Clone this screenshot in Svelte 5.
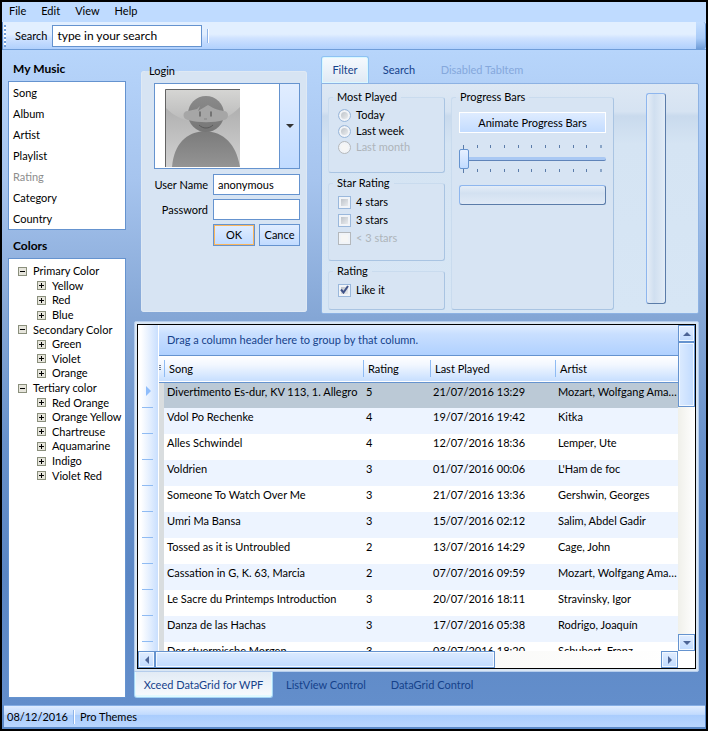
<script>
    const menus = ['File', 'Edit', 'View', 'Help'];

    const music = ['Song', 'Album', 'Artist', 'Playlist', 'Rating', 'Category', 'Country'];

    const colors = [
        { name: 'Primary Color', items: ['Yellow', 'Red', 'Blue'] },
        { name: 'Secondary Color', items: ['Green', 'Violet', 'Orange'] },
        { name: 'Tertiary color', items: ['Red Orange', 'Orange Yellow', 'Chartreuse', 'Aquamarine', 'Indigo', 'Violet Red'] }
    ];

    const songs = [
        ['Divertimento Es-dur, KV 113, 1. Allegro', 5, '21/07/2016 13:29', 'Mozart, Wolfgang Amadeus'],
        ['Vdol Po Rechenke', 4, '19/07/2016 19:42', 'Kitka'],
        ['Alles Schwindel', 4, '12/07/2016 18:36', 'Lemper, Ute'],
        ['Voldrien', 3, '01/07/2016 00:06', "L'Ham de foc"],
        ['Someone To Watch Over Me', 3, '21/07/2016 13:36', 'Gershwin, Georges'],
        ['Umri Ma Bansa', 3, '15/07/2016 02:12', 'Salim, Abdel Gadir'],
        ['Tossed as it is Untroubled', 2, '13/07/2016 14:29', 'Cage, John'],
        ['Cassation in G, K. 63, Marcia', 2, '07/07/2016 09:59', 'Mozart, Wolfgang Amadeus'],
        ['Le Sacre du Printemps Introduction', 3, '20/07/2016 18:11', 'Stravinsky, Igor'],
        ['Danza de las Hachas', 3, '17/07/2016 05:38', 'Rodrigo, Joaquín'],
        ['Der stuermische Morgen', 3, '03/07/2016 18:20', 'Schubert, Franz']
    ];

    const ticks = Array(11).fill(0);

    let search = 'type in your search';
    let userName = 'anonymous';
    let password = '';
    let played = '';
    let likeIt = true;
    let speed = 0;
    let selected = 0;
</script>

<div class="window">
    <nav class="menu">
        {#each menus as menu}
            <button>{menu}</button>
        {/each}
    </nav>

    <div class="toolbar">
        <span class="grip"></span>
        <label for="search">Search</label>
        <input id="search" type="text" bind:value={search} />
        <span class="bar-line"></span>
        <span class="overflow"></span>
    </div>

    <main>
        <aside>
            <h2>My Music</h2>
            <ul class="music">
                {#each music as entry}
                    <li class:disabled={entry === 'Rating'}>{entry}</li>
                {/each}
            </ul>

            <h2>Colors</h2>
            <div class="tree">
                <div class="tree-rows">
                    {#each colors as group}
                        <div class="node">
                            <svg width="9" height="9" viewBox="0 0 9 9"><rect x=".5" y=".5" width="8" height="8" fill="#e6e5dc" stroke="#8a8f7c" /><path d="M2 4.5h5" stroke="#000" /></svg>
                            {group.name}
                        </div>
                        {#each group.items as item}
                            <div class="node leaf">
                                <svg width="9" height="9" viewBox="0 0 9 9"><rect x=".5" y=".5" width="8" height="8" fill="#e6e5dc" stroke="#8a8f7c" /><path d="M2 4.5h5M4.5 2v5" stroke="#000" /></svg>
                                {item}
                            </div>
                        {/each}
                    {/each}
                </div>
            </div>
        </aside>

        <section class="content">
            <div class="top">
                <fieldset class="login">
                    <legend>Login</legend>
                    <div class="combo">
                        <div class="picture">
                            <svg width="75" height="78" viewBox="0 0 75 78">
                                <defs>
                                    <linearGradient id="back" x1="0" y1="0" x2="0" y2="1"><stop offset="0" stop-color="#a5a5a5" /><stop offset="1" stop-color="#d2d2d2" /></linearGradient>
                                    <linearGradient id="glow" x1="0" y1="0" x2="0" y2="1"><stop offset="0" stop-color="#d6d6d4" /><stop offset="1" stop-color="#b9b9b9" /></linearGradient>
                                    <linearGradient id="body" x1="0" y1="0" x2="0" y2="1"><stop offset="0" stop-color="#7b7b7b" /><stop offset="1" stop-color="#949494" /></linearGradient>
                                    <linearGradient id="hair" x1="0" y1="0" x2="0" y2="1"><stop offset="0" stop-color="#8a8a8a" /><stop offset="1" stop-color="#767676" /></linearGradient>
                                </defs>
                                <rect width="75" height="78" fill="url(#back)" />
                                <path d="M0 0H75V18C64 29 54 33 38 33S10 29 0 18Z" fill="url(#glow)" />
                                <path d="M7 78C9 55 21 43 40 42C59 43 71 55 75 78Z" fill="url(#body)" />
                                <circle cx="41" cy="25" r="18" fill="url(#hair)" />
                                <path d="M23 22L32 20L35 17L33 22L43 16C49 20 54 21 58 22C64 21 65 30 59 31C48 34 34 34 23 31C17 30 17 22 23 22Z" fill="#a6a6a6" />
                                <path d="M35 23v4M46 23v4" stroke="#5e5e5e" stroke-width="1.4" stroke-linecap="round" />
                                <path d="M39 30h3" stroke="#858585" />
                                <path d="M34 36C38 40 44 40 48 36" fill="none" stroke="#5a5a5a" />
                                <path d="M.5 78V.5H75" fill="none" stroke="#636363" />
                            </svg>
                        </div>
                        <span class="drop"><svg width="8" height="4" viewBox="0 0 8 4"><path d="M0 0h8L4 4z" fill="#333" /></svg></span>
                        <select aria-label="Picture"><option></option></select>
                    </div>
                    <div class="form">
                        <label for="user">User Name</label>
                        <input id="user" type="text" bind:value={userName} />
                        <label for="password">Password</label>
                        <input id="password" type="password" bind:value={password} />
                        <div class="buttons">
                            <button class="ok">OK</button>
                            <button>Cance</button>
                        </div>
                    </div>
                </fieldset>

                <div class="tabs">
                    <div class="tab-strip" role="tablist">
                        <button class="active" role="tab" aria-selected="true">Filter</button>
                        <button role="tab" aria-selected="false">Search</button>
                        <button role="tab" aria-selected="false" disabled>Disabled TabItem</button>
                    </div>
                    <div class="filter">
                        <div class="groups">
                            <fieldset class="most">
                                <legend>Most Played</legend>
                                <label><input type="radio" name="played" value="today" bind:group={played} />Today</label>
                                <label><input type="radio" name="played" value="week" bind:group={played} />Last week</label>
                                <label class="off"><input type="radio" name="played" value="month" bind:group={played} disabled />Last month</label>
                            </fieldset>
                            <fieldset class="stars">
                                <legend>Star Rating</legend>
                                <label><input type="checkbox" />4 stars</label>
                                <label><input type="checkbox" />3 stars</label>
                                <label class="off"><input type="checkbox" disabled />&lt; 3 stars</label>
                            </fieldset>
                            <fieldset class="stars like">
                                <legend>Rating</legend>
                                <label>
                                    <input type="checkbox" bind:checked={likeIt} />Like it
                                    {#if likeIt}
                                        <svg class="check" width="9" height="9" viewBox="0 0 9 9"><path d="M1 4.5L3.5 7.5L8 1" fill="none" stroke="#3f5288" stroke-width="2" /></svg>
                                    {/if}
                                </label>
                            </fieldset>
                        </div>
                        <fieldset class="progress">
                            <legend>Progress Bars</legend>
                            <button>Animate Progress Bars</button>
                            <div class="slider">
                                <div class="ticks">{#each ticks as t}<i></i>{/each}</div>
                                <input type="range" min="0" max="10" bind:value={speed} aria-label="Speed" />
                                <div class="ticks">{#each ticks as t}<i></i>{/each}</div>
                            </div>
                            <div class="meter" role="progressbar" aria-label="Progress"></div>
                        </fieldset>
                        <div class="side">
                            <div class="meter tall" role="progressbar" aria-label="Vertical progress"></div>
                        </div>
                    </div>
                </div>
            </div>

            <div class="data">
                <div class="grid">
                    <div class="selectors">
                        {#each songs as song, i}
                            <div class="selector">
                                {#if i === selected}
                                    <svg width="5" height="10" viewBox="0 0 5 10"><path d="M0 0l5 5l-5 5z" fill="#8fbdfb" /></svg>
                                {/if}
                            </div>
                        {/each}
                    </div>
                    <div class="rows">
                        <div class="group-by">Drag a column header here to group by that column.</div>
                        <table>
                            <thead>
                                <tr>
                                    <th class="handle"><svg width="3" height="7" viewBox="0 0 3 7"><path d="M0 .5h2M0 2.5h2M0 4.5h2" stroke="#6c7a90" /></svg></th>
                                    <th class="song"><span>Song</span></th>
                                    <th class="rating"><span>Rating</span></th>
                                    <th class="last"><span>Last Played</span></th>
                                    <th><span>Artist</span></th>
                                </tr>
                            </thead>
                            <tbody>
                                {#each songs as song, i}
                                    <tr class:selected={i === selected} on:click={() => (selected = i)}>
                                        <td class="handle"></td>
                                        {#each song as value}
                                            <td>{value}</td>
                                        {/each}
                                    </tr>
                                {/each}
                            </tbody>
                        </table>
                    </div>
                    <div class="scroll vertical">
                        <button aria-label="Scroll up"><svg width="8" height="4" viewBox="0 0 8 4"><path d="M0 4h8L4 0z" fill="#4c6496" /></svg></button>
                        <div class="thumb"></div>
                        <button aria-label="Scroll down"><svg width="8" height="4" viewBox="0 0 8 4"><path d="M0 0h8L4 4z" fill="#4c6496" /></svg></button>
                    </div>
                    <div class="scroll horizontal">
                        <button aria-label="Scroll left"><svg width="4" height="8" viewBox="0 0 4 8"><path d="M4 0v8L0 4z" fill="#4c6496" /></svg></button>
                        <div class="thumb"></div>
                        <button aria-label="Scroll right"><svg width="4" height="8" viewBox="0 0 4 8"><path d="M0 0v8L4 4z" fill="#4c6496" /></svg></button>
                    </div>
                </div>
            </div>
            <div class="bottom-tabs" role="tablist">
                <button class="active" role="tab" aria-selected="true">Xceed DataGrid for WPF</button>
                <button role="tab" aria-selected="false">ListView Control</button>
                <button role="tab" aria-selected="false">DataGrid Control</button>
            </div>
        </section>
    </main>

    <footer>
        <span>08/12/2016</span>
        <span class="bar-line"></span>
        <span>Pro Themes</span>
    </footer>
</div>

<style>
    :global(body) {
        margin: 0;
    }

    .window, .window * {
        box-sizing: border-box;
    }

    .window {
        display: flex;
        flex-direction: column;
        height: 100vh;
        border: 2px solid #000;
        background: #5c8ac8;
        font-family: Lato, "Open Sans", sans-serif;
        font-size: 11px;
        line-height: 14px;
        color: #000;
    }

    button, input, select {
        font: inherit;
        color: inherit;
        margin: 0;
        padding: 0;
    }

    button {
        background: none;
        border: none;
        white-space: nowrap;
    }

    svg {
        display: block;
        flex: none;
    }

    input[type='text'], input[type='password'] {
        border: 1px solid #6593cf;
        background: #fff;
        padding: 0 4px;
        min-width: 0;
        outline: none;
    }

    /* menu and toolbar */
    .menu {
        display: flex;
        gap: 15px;
        height: 20px;
        padding: 0 7px 2px;
        background: #bfdbff;
    }

    .toolbar {
        display: flex;
        align-items: center;
        height: 28px;
        margin-left: 1px;
        border-bottom: 1px solid #6f9dd9;
        background: linear-gradient(#e2efff 45%, #cfe2ff 60%, #b0d0fd);
    }

    .grip {
        width: 2px;
        height: 22px;
        margin: 0 9px 0 1px;
        background: repeating-linear-gradient(#6f9dd9 0 2px, #fff 2px 4px);
    }

    .toolbar input {
        width: 150px;
        height: 22px;
        margin: 0 5px 0 5px;
        font-size: 12px;
    }

    .bar-line {
        width: 2px;
        height: 14px;
        border-left: 1px solid #8fb4e8;
        background: #fff;
    }

    .overflow {
        width: 10px;
        height: 27px;
        margin-left: auto;
        border-right: 1px solid #6f9dd9;
        border-radius: 0 3px 3px 0;
        background: linear-gradient(#c4deff, #a9cbf8 60%, #6f9dd9);
    }

    main {
        flex: 1;
        min-height: 0;
        display: flex;
        gap: 8px;
        padding: 6px 7px 7px 6px;
        background: linear-gradient(#b7d5fb, #a6c4ee 20%, #84a6d5 41%, #6891cb 60%, #5a86c4 80%, #638ecb);
    }

    /* left side lists */
    aside {
        display: flex;
        flex-direction: column;
        width: 118px;
    }

    h2 {
        margin: 6px 5px 5px;
        font-size: 12px;
        line-height: 14px;
    }

    h2:nth-of-type(2) {
        margin-top: 9px;
    }

    ul {
        margin: 0;
        padding: 0 4px;
        list-style: none;
    }

    .music, .tree {
        border: 1px solid #6593cf;
        background: #fff;
    }

    .music li {
        height: 21px;
        line-height: 21px;
    }

    .disabled {
        color: #8d8d8d;
    }

    .tree {
        flex: 1;
        padding: 5px 0 0 9px;
    }

    .tree-rows {
        display: grid;
        grid-template-rows: repeat(15, 1fr);
        height: 219px;
    }

    .node {
        display: flex;
        align-items: center;
        gap: 6px;
        white-space: nowrap;
    }

    .leaf {
        padding-left: 19px;
    }

    .content {
        flex: 1;
        min-width: 0;
        display: flex;
        flex-direction: column;
    }

    .top {
        display: flex;
        gap: 14px;
        height: 258px;
        margin-bottom: 7px;
        padding-left: 7px;
    }

    fieldset {
        min-width: 0;
        margin: 0;
        border: 1px solid #c9dbee;
        border-right-color: #a9c4e2;
        border-bottom-color: #a9c4e2;
        border-radius: 3px;
        background: #d7e4f3;
    }

    legend {
        padding: 0 4px;
        line-height: 14px;
    }

    /* login */
    .login {
        width: 166px;
        margin-top: 8px;
        margin-bottom: 2px;
        padding: 5px 6px 0 12px;
        border-color: #dfe9f4;
    }

    .login legend {
        margin-left: -9px;
    }

    .combo {
        position: relative;
        display: flex;
        height: 86px;
        border: 1px solid #6593cf;
        background: #fff;
    }

    .picture {
        flex: 1;
        padding: 5px 0 0 10px;
    }

    .drop {
        display: flex;
        align-items: center;
        justify-content: center;
        width: 20px;
        border-left: 1px solid #6593cf;
        background: linear-gradient(#e1edff, #c1dbff);
    }

    .combo select {
        position: absolute;
        inset: 0;
        width: 100%;
        height: 100%;
        opacity: 0;
    }

    .form {
        display: grid;
        grid-template-columns: 1fr 87px;
        grid-template-rows: 21px 21px 22px;
        row-gap: 4px;
        column-gap: 5px;
        align-items: center;
        margin-top: 5px;
        text-align: right;
        white-space: nowrap;
    }

    .form input {
        height: 21px;
    }

    .buttons {
        grid-column: 2;
        display: grid;
        grid-template-columns: 42px 41px;
        gap: 4px;
    }

    .buttons button {
        height: 22px;
        border: 1px solid #6593cf;
        background: linear-gradient(#e1edff, #c1dbff);
    }

    .buttons .ok {
        box-shadow: inset 0 0 0 1px #fbb65c;
    }

    /* filter tabs */
    .tabs {
        flex: 1;
        display: flex;
        flex-direction: column;
        min-width: 0;
    }

    .tab-strip {
        display: flex;
        height: 27px;
        color: #15428b;
    }

    .tab-strip button {
        width: 60px;
        border: 1px solid transparent;
        border-bottom: none;
    }

    .tab-strip .active {
        width: 48px;
        border-color: #8ec2f3;
        border-radius: 3px 3px 0 0;
        background: linear-gradient(#f6fafe, #dfe9f4);
        box-shadow: inset 0 0 0 1px #d9f8ff;
    }

    .tab-strip button:disabled {
        width: 106px;
        color: #85a8dc;
    }

    .filter {
        flex: 1;
        display: flex;
        gap: 6px;
        padding: 6px 6px 3px;
        border: 1px solid #8db2e3;
        border-radius: 0 2px 2px 2px;
        background: linear-gradient(#dde8f4, #d6e3f2 12%, #c9daed 14%, #d5e4f3 26%, #d7e6f5);
    }

    .groups {
        display: grid;
        grid-template-rows: 83px 85px 1fr;
        row-gap: 3px;
        width: 117px;
    }

    .groups fieldset {
        padding: 3px 9px 0;
    }

    .groups legend, .progress legend {
        margin-left: -5px;
    }

    .groups label {
        position: relative;
        display: flex;
        align-items: center;
        gap: 5px;
        height: 16px;
    }

    .stars label {
        height: 18px;
    }

    .groups .off {
        color: #aeb4ba;
    }

    .groups input {
        appearance: none;
        width: 13px;
        height: 13px;
        border: 1px solid #9ab8dc;
        background: linear-gradient(135deg, #b3b9c0, #f4f6f8);
        box-shadow: inset 0 0 0 2px #f1f4f8;
    }

    .groups input[type='radio'] {
        border-radius: 50%;
    }

    .groups input:disabled {
        border-color: #b4b8bc;
        background: #f6f6f5;
    }

    .check {
        position: absolute;
        left: 2px;
        top: 4px;
    }

    .progress {
        width: 163px;
        padding: 8px 7px 0;
    }

    .progress legend {
        margin-left: -3px;
    }

    .progress button {
        width: 100%;
        height: 21px;
        border: 1px solid #fff;
        background: linear-gradient(#dfecff, #c3dcff);
    }

    .slider {
        margin: 12px 0;
    }

    .ticks {
        display: flex;
        justify-content: space-between;
        height: 4px;
        padding: 0 4px;
    }

    .ticks i {
        width: 1px;
        height: 3px;
        background: #5b7ca9;
    }

    .ticks i:first-child {
        height: 4px;
    }

    .ticks i:last-child {
        width: 2px;
        background: #8ba6c8;
    }

    .slider input {
        display: block;
        appearance: none;
        width: 100%;
        height: 20px;
        background: none;
    }

    .slider input::-webkit-slider-runnable-track {
        height: 4px;
        border-bottom: 1px solid #5f83b8;
        border-radius: 2px;
        background: #a9c8f3;
    }

    .slider input::-webkit-slider-thumb {
        appearance: none;
        width: 10px;
        height: 20px;
        margin-top: -8px;
        border: 1px solid #6593cf;
        border-radius: 2px;
        background: linear-gradient(#e6f0ff, #c1dbff);
    }

    .meter {
        height: 20px;
        border: 1px solid #8eb6ee;
        border-bottom-color: #5b7ca9;
        border-right-color: #5b7ca9;
        border-radius: 3px;
        background: linear-gradient(#e5edf7, #d3e1f1 40%, #e0eaf6);
    }

    .side {
        flex: 1;
        display: flex;
        justify-content: center;
        padding: 3px 0 6px;
    }

    .tall {
        width: 20px;
        height: 100%;
        background: linear-gradient(90deg, #e5edf7, #d0dff0 40%, #e2ecf7);
    }

    /* data grid */
    .data {
        flex: 1;
        min-height: 0;
        display: flex;
        padding: 2px;
        border: 1px solid #b5cdec;
        border-radius: 2px 2px 2px 0;
        background: #d9e6f4;
    }

    .grid {
        flex: 1;
        min-width: 0;
        display: grid;
        grid-template-columns: 21px 1fr 17px;
        grid-template-rows: minmax(0, 1fr) 17px;
        border: 1px solid #000;
        background: #fff;
    }

    .selectors {
        overflow: hidden;
        padding: 57px 5px 0 4px;
        border-right: 1px solid #fff;
        background: linear-gradient(90deg, #fff 15%, #c9dffe);
    }

    .selector {
        height: 26px;
        padding: 4px 0 0 4px;
        border-bottom: 1px solid #8fbbf3;
    }

    .rows {
        min-width: 0;
        overflow: hidden;
    }

    .group-by {
        height: 31px;
        padding: 0 8px;
        border-bottom: 1px solid #6593cf;
        line-height: 30px;
        color: #15428b;
        background: linear-gradient(#e0edff, #c9dfff 30%, #b0d1ff);
    }

    table {
        width: 100%;
        table-layout: fixed;
        border-collapse: collapse;
    }

    thead tr {
        height: 26px;
        border-bottom: 1px solid #6593cf;
        background: linear-gradient(#fff, #f2f7ff 35%, #c7dfff);
    }

    th {
        padding: 0;
        font-weight: normal;
        text-align: left;
    }

    th span {
        display: block;
        height: 17px;
        padding-left: 4px;
        border-left: 1px solid #8fbbf3;
        line-height: 18px;
    }

    .handle {
        width: 5px;
    }

    .song {
        width: 199px;
    }

    .rating {
        width: 67px;
    }

    .last {
        width: 125px;
    }

    td {
        height: 26px;
        padding: 2px 0 0 3px;
        vertical-align: top;
        overflow: hidden;
        white-space: nowrap;
        text-overflow: ellipsis;
    }

    tbody tr:nth-child(even) {
        background: #edf4ff;
    }

    tbody .selected {
        background: #bbc9d6;
    }

    td.handle {
        padding: 0;
        background: #d9dddf;
    }

    .scroll {
        display: flex;
        background: linear-gradient(90deg, #f0f0ea, #fff);
    }

    .scroll button {
        display: flex;
        align-items: center;
        justify-content: center;
        width: 17px;
        height: 17px;
        border: 1px solid #6593cf;
        background: linear-gradient(#e1edff, #c1dbff);
        box-shadow: inset 0 0 0 1px #f2f8ff;
    }

    .scroll button:last-child {
        margin: auto 0 0 auto;
    }

    .vertical {
        flex-direction: column;
    }

    .horizontal {
        grid-column: 1 / 3;
    }

    .thumb {
        border: 1px solid #6593cf;
        background: linear-gradient(#dcebff, #c1dbff);
        box-shadow: inset 0 0 0 1px #f2f8ff;
    }

    .vertical .thumb {
        height: 65px;
        background: linear-gradient(90deg, #dcebff, #c1dbff);
    }

    .horizontal .thumb {
        width: 340px;
    }

    .bottom-tabs {
        display: flex;
        height: 26px;
        color: #15428b;
    }

    .bottom-tabs button {
        width: 106px;
    }

    .bottom-tabs .active {
        width: 139px;
        border: 1px solid #a5d5f5;
        border-top: none;
        border-radius: 0 0 3px 3px;
        background: linear-gradient(#e2ebf5, #f8fbfe);
        box-shadow: inset 0 -1px 0 1px #e2faff;
    }

    footer {
        display: flex;
        align-items: center;
        gap: 5px;
        height: 22px;
        margin: 0 1px 2px 2px;
        padding-left: 3px;
        border-top: 1px solid #86aee4;
        background: linear-gradient(#dfecff, #c2dbfe 40%, #aacdfd 45%, #b9d6fe);
    }
</style>
